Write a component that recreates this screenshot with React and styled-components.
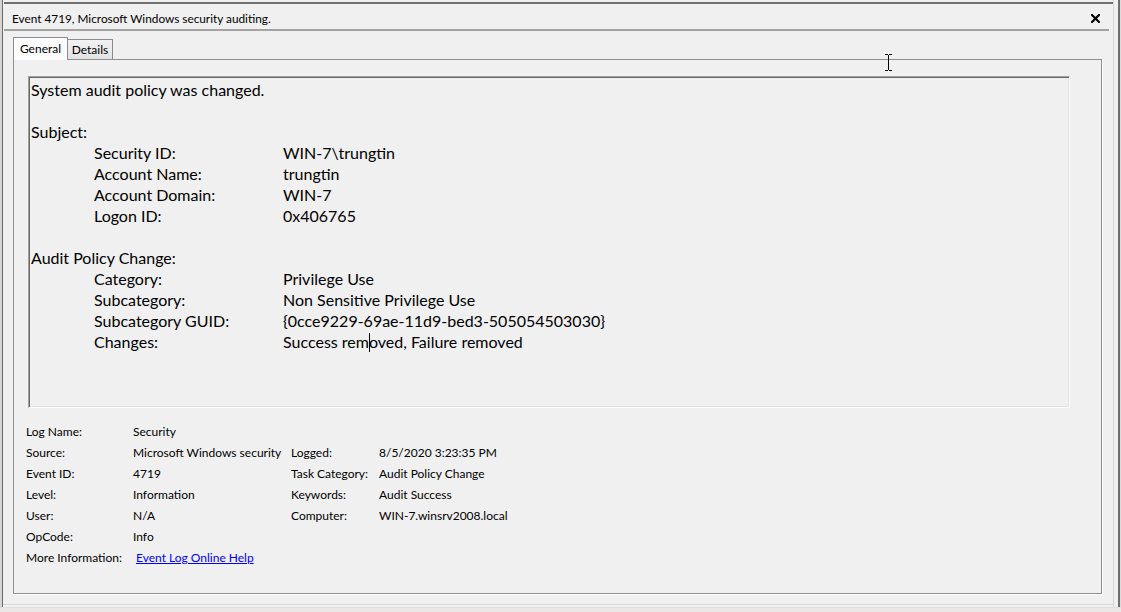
import styled, { createGlobalStyle } from "styled-components";

const GlobalStyle = createGlobalStyle`
  html, body {
    margin: 0;
    padding: 0;
    background: #f0f0f0;
  }
  body {
    font-family: "Segoe UI", Lato, "Noto Sans", sans-serif;
    color: #000;
  }
`;

const Screen = styled.div`
  position: relative;
  width: 1121px;
  height: 612px;
  display: flex;
  flex-direction: column;
  overflow: hidden;
  background: #f0f0f0;
`;

const Window = styled.div`
  height: 607px;
  display: flex;
  margin-left: 2px;
  border-left: 1px solid #6c6c6c;
  box-shadow: -2px 0 0 #d4d4d4;
`;

const Pane = styled.div`
  flex: 1;
  display: flex;
  flex-direction: column;
  height: 605px;
  box-sizing: border-box;
  border-bottom: 1px solid #d8d8d8;
  min-width: 0;
`;

const RightRail = styled.div`
  width: 8px;
  background: linear-gradient(
    to right,
    #d6d6d6 0 1px,
    #f0f0f0 1px 5px,
    #6e6e6e 5px 7px,
    #dcdcdc 7px 8px
  );
`;

const BottomStrip = styled.div`
  flex: 1;
  background: #ebe7e7;
  border-top: 1px solid #dedede;
`;

const TopRule = styled.div`
  height: 4px;
  margin: 2px 0 0 1px;
  border-top: 2px solid #707070;
`;

const Header = styled.div`
  height: 21px;
  display: flex;
  align-items: center;
  justify-content: space-between;
  padding: 0 8px 0 8px;
  margin: 0 4px 0 1px;
  border-bottom: 2px solid #a3a3a3;
  font-size: 11.8px;
`;

const CloseButton = styled.button`
  display: flex;
  align-items: center;
  justify-content: center;
  width: 11px;
  height: 11px;
  padding: 0;
  border: 0;
  background: none;
  cursor: pointer;
`;

const Body = styled.div`
  flex: 1;
  display: flex;
  flex-direction: column;
  padding: 6px 11px 10px 10px;
  min-height: 0;
`;

const TabRow = styled.div`
  display: flex;
  align-items: flex-end;
  height: 22px;
`;

const Tab = styled.div`
  position: relative;
  box-sizing: border-box;
  display: flex;
  align-items: center;
  justify-content: center;
  font-size: 12px;
  border: 1px solid #898c95;
  border-bottom: 0;
  width: ${(p) => (p.$active ? "55px" : "45px")};
  height: ${(p) => (p.$active ? "23px" : "20px")};
  margin-bottom: ${(p) => (p.$active ? "-1px" : "0")};
  padding-bottom: ${(p) => (p.$active ? "2px" : "0")};
  z-index: ${(p) => (p.$active ? 1 : 0)};
  background: ${(p) =>
    p.$active ? "#fcfcfc" : "linear-gradient(#f2f2f2, #e3e3e3)"};
  ${(p) => !p.$active && "border-left: 0;"}
`;

const TabPanel = styled.div`
  flex: 1;
  display: flex;
  flex-direction: column;
  border: 1px solid #8e8f8f;
  box-shadow: 1px 1px 0 #ffffff;
  padding: 16px 31px 0 14px;
  background: #f0f0f0;
`;

const Message = styled.div`
  position: relative;
  height: 332px;
  box-sizing: border-box;
  border: 1px solid;
  border-color: #a0a0a0 #ffffff #ffffff #a0a0a0;
  box-shadow: inset 1px 1px 0 #696969, inset -1px -1px 0 #e3e3e3;
  padding: 2px 2px;
  font-size: 16px;
  line-height: 21px;
`;

const Line = styled.div`
  height: 21px;
  white-space: nowrap;
`;

const FieldLine = styled.div`
  display: grid;
  grid-template-columns: 63px 189px 1fr;
  height: 21px;
  white-space: nowrap;
  & > :first-child {
    grid-column: 2;
  }
`;

const Caret = styled.span`
  display: inline-block;
  width: 1px;
  height: 19px;
  margin-right: -1px;
  background: #000;
  vertical-align: -4px;
`;

const Details = styled.div`
  display: grid;
  grid-template-columns: 107px 158px 88px 1fr;
  grid-auto-rows: 21px;
  align-items: center;
  margin: 13px 0 0 -2px;
  font-size: 12px;
  white-space: nowrap;
`;

const Cell = styled.div`
  grid-column: ${(p) => p.$col || "auto"};
`;

const HelpLink = styled.a`
  color: #0000ff;
  text-decoration: underline;
  padding-left: 3px;
  cursor: pointer;
`;

const Cursor = styled.svg`
  position: absolute;
  left: 884px;
  top: 54px;
  pointer-events: none;
`;

const subject = [
  ["Security ID:", "WIN-7\\trungtin"],
  ["Account Name:", "trungtin"],
  ["Account Domain:", "WIN-7"],
  ["Logon ID:", "0x406765"],
];

const policy = [
  ["Category:", "Privilege Use"],
  ["Subcategory:", "Non Sensitive Privilege Use"],
  ["Subcategory GUID:", "{0cce9229-69ae-11d9-bed3-505054503030}"],
];

const App = () => {
  return (
    <Screen>
      <GlobalStyle />
      <Window>
        <Pane>
          <TopRule />
          <Header>
            <span>Event 4719, Microsoft Windows security auditing.</span>
            <CloseButton aria-label="Close">
              <svg width="9" height="9" viewBox="0 0 9 9">
                <path
                  d="M1 1L8 8M8 1L1 8"
                  stroke="#000"
                  strokeWidth="2.2"
                  strokeLinecap="square"
                />
              </svg>
            </CloseButton>
          </Header>
          <Body>
            <TabRow>
              <Tab $active>General</Tab>
              <Tab>Details</Tab>
            </TabRow>
            <TabPanel>
              <Message>
                <Line>System audit policy was changed.</Line>
                <Line />
                <Line>Subject:</Line>
                {subject.map(([k, v]) => (
                  <FieldLine key={k}>
                    <span>{k}</span>
                    <span>{v}</span>
                  </FieldLine>
                ))}
                <Line />
                <Line>Audit Policy Change:</Line>
                {policy.map(([k, v]) => (
                  <FieldLine key={k}>
                    <span>{k}</span>
                    <span>{v}</span>
                  </FieldLine>
                ))}
                <FieldLine>
                  <span>Changes:</span>
                  <span>
                    Success rem
                    <Caret />
                    oved, Failure removed
                  </span>
                </FieldLine>
              </Message>
              <Details>
                <Cell>Log Name:</Cell>
                <Cell>Security</Cell>
                <Cell />
                <Cell />
                <Cell>Source:</Cell>
                <Cell>Microsoft Windows security</Cell>
                <Cell>Logged:</Cell>
                <Cell>8/5/2020 3:23:35 PM</Cell>
                <Cell>Event ID:</Cell>
                <Cell>4719</Cell>
                <Cell>Task Category:</Cell>
                <Cell>Audit Policy Change</Cell>
                <Cell>Level:</Cell>
                <Cell>Information</Cell>
                <Cell>Keywords:</Cell>
                <Cell>Audit Success</Cell>
                <Cell>User:</Cell>
                <Cell>N/A</Cell>
                <Cell>Computer:</Cell>
                <Cell>WIN-7.winsrv2008.local</Cell>
                <Cell $col="1">OpCode:</Cell>
                <Cell>Info</Cell>
                <Cell $col="1">More Information:</Cell>
                <Cell $col="2 / span 2">
                  <HelpLink>Event Log Online Help</HelpLink>
                </Cell>
              </Details>
            </TabPanel>
          </Body>
        </Pane>
        <RightRail />
      </Window>
      <BottomStrip />
      <Cursor width="9" height="17" viewBox="0 0 9 17">
        <path
          d="M1 0.5H4M5 0.5H8M4.5 1V16M1 16.5H4M5 16.5H8"
          stroke="#000"
          strokeWidth="1"
          fill="none"
        />
      </Cursor>
    </Screen>
  );
};

export default App;
